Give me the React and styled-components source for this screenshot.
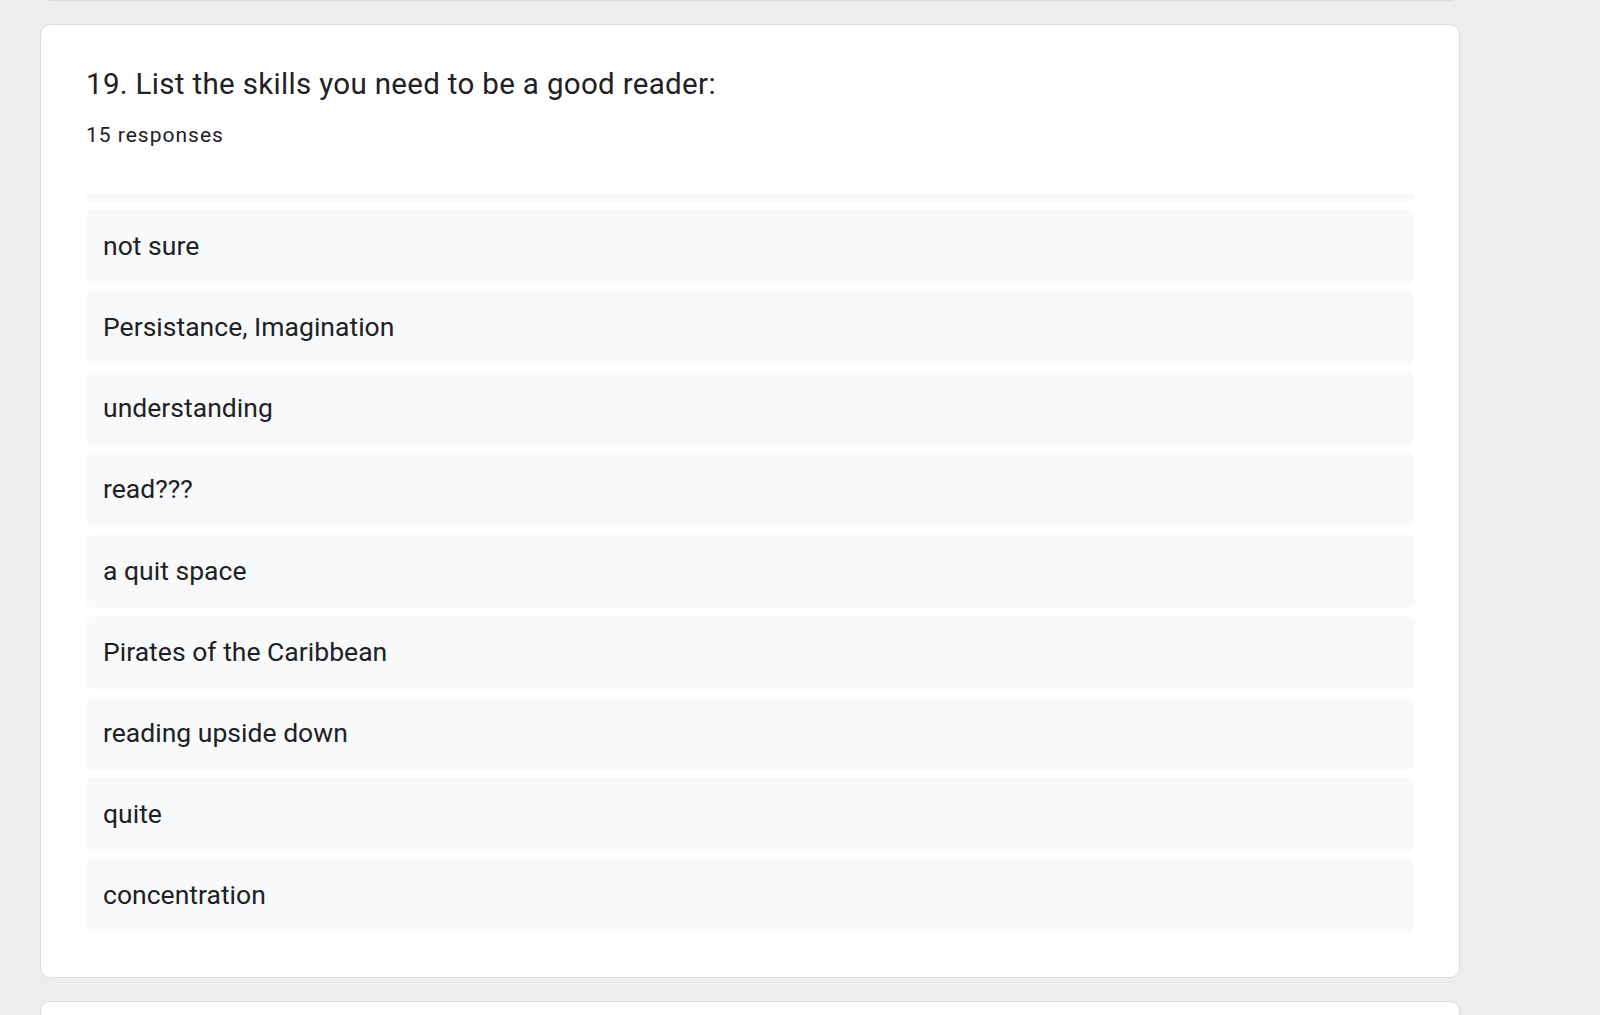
import React, { useLayoutEffect, useRef } from "react";
import styled, { createGlobalStyle } from "styled-components";

const Global = createGlobalStyle`
  html, body {
    margin: 0;
    padding: 0;
    background: #ededed;
    overflow: hidden;
  }
  body {
    font-family: Roboto, "Noto Sans", Arial, sans-serif;
    color: #202124;
  }
`;

const Page = styled.div`
  height: 1015px;
  overflow: hidden;
  padding-left: 40px;
`;

const Column = styled.div`
  width: 1420px;
  display: flex;
  flex-direction: column;
  gap: 23px;
  margin-top: -199px;
`;

const Card = styled.section`
  box-sizing: border-box;
  background: #ffffff;
  border: 1px solid #dadce0;
  border-radius: 10px;
  padding: ${(p) => (p.$empty ? "0" : "41px 45px 45px 45px")};
  height: ${(p) => (p.$empty ? "200px" : "auto")};
  flex-shrink: 0;
`;

const Title = styled.h2`
  margin: 0;
  font-size: 29.5px;
  line-height: 36px;
  letter-spacing: 0.33px;
  font-weight: 400;
  color: #202124;
`;

const Count = styled.div`
  margin-top: 19px;
  font-size: 21px;
  line-height: 28px;
  letter-spacing: 1px;
  color: #202124;
`;

const List = styled.div`
  margin-top: 45px;
  height: 738px;
  overflow-y: auto;
  scrollbar-width: none;
  display: flex;
  flex-direction: column;
  gap: 8px;
  &::-webkit-scrollbar {
    display: none;
  }
`;

const Item = styled.div`
  box-sizing: border-box;
  flex-shrink: 0;
  height: 73.2px;
  display: flex;
  align-items: center;
  padding: 0 17px 2px;
  background: #f8f9fa;
  border-radius: 7px;
  font-size: 26.5px;
  letter-spacing: 0.02px;
  color: #202124;
`;

const responses = [
  "reading",
  "focus",
  "patience",
  "good vocabulary",
  "not sure",
  "Persistance, Imagination",
  "understanding",
  "read???",
  "a quit space",
  "Pirates of the Caribbean",
  "reading upside down",
  "quite",
  "concentration",
];

export default function App() {
  const listRef = useRef(null);
  useLayoutEffect(() => {
    const el = listRef.current;
    if (el) {
      el.scrollTop = 4 * 81.2 + 66.6;
    }
  }, []);
  return (
    <>
      <Global />
      <Page>
        <Column>
          <Card $empty />
          <Card>
            <Title>19. List the skills you need to be a good reader:</Title>
            <Count>15 responses</Count>
            <List ref={listRef}>
              {responses.map((r, i) => (
                <Item key={i}>{r}</Item>
              ))}
            </List>
          </Card>
          <Card $empty />
        </Column>
      </Page>
    </>
  );
}
